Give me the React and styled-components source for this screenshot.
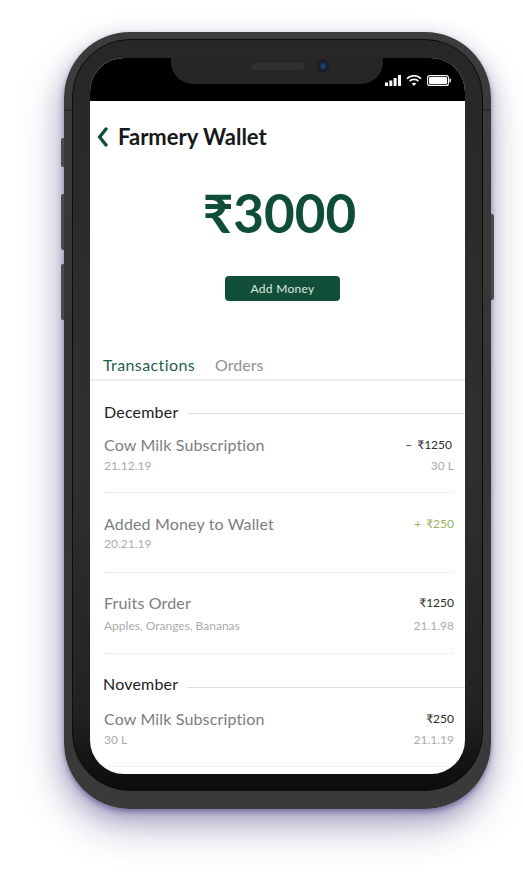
import React from 'react';
import styled, { createGlobalStyle } from 'styled-components';

const Global = createGlobalStyle`
  html, body { margin: 0; padding: 0; background: #fff; }
  body { font-family: Lato, "Noto Sans", sans-serif; width: 523px; height: 874px; overflow: hidden; }
`;

const Stage = styled.div`
  width: 523px;
  height: 874px;
  padding: 32px 32px 0 64px;
  box-sizing: border-box;
`;

const Phone = styled.div`
  position: relative;
  width: 427px;
  height: 777px;
  box-sizing: border-box;
  padding: 7px 8px 18px;
  border-radius: 66px;
  background: linear-gradient(180deg, #3c3c3c 0%, #333 50%, #3a3a3a 100%);
  box-shadow: 0 3px 5px rgba(70, 60, 130, 0.5), 0 10px 22px rgba(70, 65, 130, 0.32), -10px 20px 40px rgba(70, 65, 130, 0.2), 8px 20px 40px rgba(70, 65, 130, 0.1);
`;

const SideKey = styled.div`
  position: absolute;
  top: ${(p) => p.$top}px;
  height: ${(p) => p.$height}px;
  width: 3px;
  background: #4c4c4c;
  ${(p) => (p.$right ? 'right: -3px; border-radius: 0 2px 2px 0;' : 'left: -3px; border-radius: 2px 0 0 2px;')}
`;

const Antenna = styled.div`
  position: absolute;
  top: 77px;
  width: 8px;
  height: 2px;
  background: #2b2b2b;
  ${(p) => (p.$right ? 'right: 0;' : 'left: 0;')}
`;

const Bezel = styled.div`
  width: 411px;
  height: 752px;
  box-sizing: border-box;
  padding: 18px 17px 16px 17px;
  border: 1px solid #0c0c0c;
  border-radius: 58px;
  background: linear-gradient(180deg, #272727 0%, #303030 55%, #222 90%, #0c0c0c 100%);
`;

const Screen = styled.div`
  position: relative;
  width: 375px;
  height: 716px;
  overflow: hidden;
  border-radius: 34px;
  background: #fff;
  display: flex;
  flex-direction: column;
`;

const StatusBar = styled.div`
  height: 43px;
  flex: none;
  background: #000;
  display: flex;
  justify-content: flex-end;
  align-items: flex-start;
  padding: 17px 14px 0 0;
  box-sizing: border-box;
  gap: 5px;
`;

const Notch = styled.div`
  position: absolute;
  left: 81px;
  top: 0;
  width: 212px;
  height: 26px;
  background: #262626;
  border-radius: 0 0 22px 22px;
`;

const Speaker = styled.div`
  position: absolute;
  left: 80px;
  top: 5px;
  width: 54px;
  height: 7px;
  border-radius: 4px;
  background: #303030;
`;

const Camera = styled.div`
  position: absolute;
  left: 146px;
  top: 2px;
  width: 12px;
  height: 12px;
  border-radius: 50%;
  background: radial-gradient(circle, #2a4f86 0%, #14233c 45%, #1b1b1b 60%, #1e1e1e 100%);
`;

const Header = styled.div`
  display: flex;
  align-items: center;
  gap: 10px;
  padding: 24px 0 0 7px;
  height: 24px;
`;

const Title = styled.h1`
  margin: 0;
  font-size: 22px;
  line-height: 24px;
  font-weight: 700;
  color: #15191a;
`;

const Balance = styled.div`
  margin-top: 34px;
  padding-left: 4px;
  text-align: center;
  font-size: 53px;
  line-height: 60px;
  font-weight: 700;
  color: #0f4d37;
`;

const AddButton = styled.button`
  display: block;
  width: 115px;
  height: 25px;
  margin: 33px auto 0 135px;
  padding: 0;
  border: 0;
  border-radius: 4px;
  background: #114f38;
  color: #dfe8e4;
  font: 400 12px Lato, sans-serif;
  letter-spacing: 0.3px;
`;

const Tabs = styled.div`
  display: flex;
  gap: 20px;
  margin-top: 53px;
  padding: 0 0 3px 13px;
  border-bottom: 2px solid #eee;
`;

const Tab = styled.div`
  font-size: 16px;
  line-height: 22px;
  letter-spacing: ${(p) => (p.$active ? '0.4px' : '0')};
  color: ${(p) => (p.$active ? '#1f5f49' : '#8f9294')};
`;

const Month = styled.div`
  display: flex;
  align-items: center;
  gap: 9px;
  margin-top: ${(p) => p.$top}px;
  padding-left: ${(p) => p.$left}px;
  font-size: 16px;
  line-height: 20px;
  letter-spacing: 0.2px;
  color: #222;
  &::after {
    content: '';
    flex: 1;
    height: 1px;
    margin-top: ${(p) => p.$drop}px;
    background: #dcdcdc;
  }
`;

const Row = styled.div`
  padding: ${(p) => p.$pad};
  margin-right: 11px;
  margin-left: 14px;
  display: flex;
  justify-content: space-between;
  border-bottom: 1px dotted #e2e2e2;
`;

const Col = styled.div`
  display: flex;
  flex-direction: column;
  gap: ${(p) => p.$gap}px;
  align-items: ${(p) => (p.$end ? 'flex-end' : 'flex-start')};
`;

const Name = styled.div`
  font-size: 16px;
  line-height: 20px;
  letter-spacing: 0.15px;
  color: #7b7d7f;
`;

const Sub = styled.div`
  font-size: 12px;
  line-height: 16px;
  color: #aaacae;
`;

const Amount = styled.div`
  font-size: 12px;
  line-height: 20px;
  word-spacing: 2px;
  margin-right: ${(p) => p.$inset || 0}px;
  color: ${(p) => p.$color || '#2c2c2c'};
`;

const Signal = () => (
  <svg width="16" height="11" viewBox="0 0 16 11" fill="#fff">
    <rect x="0" y="7.5" width="3" height="3.5" />
    <rect x="4.3" y="5.5" width="3" height="5.5" />
    <rect x="8.6" y="3" width="3" height="8" />
    <rect x="13" y="0" width="3" height="11" />
  </svg>
);

const Wifi = () => (
  <svg width="16" height="11" viewBox="0 0 16 11" fill="none" stroke="#fff" strokeWidth="1.7">
    <path d="M1 3.6 C5 -0.2 11 -0.2 15 3.6" />
    <path d="M3.6 6 C6 3.8 10 3.8 12.4 6" />
    <path d="M8 11 L5.8 8.4 C7 7.4 9 7.4 10.2 8.4 Z" fill="#fff" stroke="none" />
  </svg>
);

const Battery = () => (
  <svg width="24" height="11" viewBox="0 0 24 11" fill="none">
    <rect x="0.6" y="0.6" width="20.8" height="9.8" rx="2" stroke="#fff" strokeWidth="1.1" />
    <rect x="2" y="2" width="18" height="7" rx="1" fill="#fff" />
    <rect x="22.4" y="3.6" width="1.4" height="3.8" rx="0.6" fill="#fff" />
  </svg>
);

const Chevron = () => (
  <svg width="11" height="20" viewBox="0 0 11 20" fill="none">
    <path d="M9 2 L2.6 10 L9 18" stroke="#0f4d37" strokeWidth="3.4" strokeLinecap="round" strokeLinejoin="round" />
  </svg>
);

export default function App() {
  return (
    <Stage>
      <Global />
      <Phone>
        <SideKey $top={106} $height={29} />
        <SideKey $top={162} $height={56} />
        <SideKey $top={232} $height={56} />
        <SideKey $right $top={182} $height={86} />
        <Antenna />
        <Antenna $right />
        <Bezel>
          <Screen>
            <StatusBar>
              <Signal />
              <Wifi />
              <Battery />
            </StatusBar>
            <Notch>
              <Speaker />
              <Camera />
            </Notch>
            <Header>
              <Chevron />
              <Title>Farmery Wallet</Title>
            </Header>
            <Balance>₹3000</Balance>
            <AddButton>Add Money</AddButton>
            <Tabs>
              <Tab $active>Transactions</Tab>
              <Tab>Orders</Tab>
            </Tabs>
            <Month $top={21} $left={14} $drop={2}>December</Month>
            <Row $pad="13px 0 18px">
              <Col $gap={3}>
                <Name>Cow Milk Subscription</Name>
                <Sub>21.12.19</Sub>
              </Col>
              <Col $gap={3} $end>
                <Amount $inset={2}>– ₹1250</Amount>
                <Sub>30 L</Sub>
              </Col>
            </Row>
            <Row $pad="21px 0 20px">
              <Col $gap={2}>
                <Name>Added Money to Wallet</Name>
                <Sub>20.21.19</Sub>
              </Col>
              <Col $gap={2} $end>
                <Amount $color="#9bb062">+ ₹250</Amount>
              </Col>
            </Row>
            <Row $pad="20px 0 19px">
              <Col $gap={5}>
                <Name>Fruits Order</Name>
                <Sub>Apples, Oranges, Bananas</Sub>
              </Col>
              <Col $gap={5} $end>
                <Amount>₹1250</Amount>
                <Sub>21.1.98</Sub>
              </Col>
            </Row>
            <Month $top={20} $left={13} $drop={6}>November</Month>
            <Row $pad="15px 0 18px">
              <Col $gap={3}>
                <Name>Cow Milk Subscription</Name>
                <Sub>30 L</Sub>
              </Col>
              <Col $gap={3} $end>
                <Amount>₹250</Amount>
                <Sub>21.1.19</Sub>
              </Col>
            </Row>
          </Screen>
        </Bezel>
      </Phone>
    </Stage>
  );
}
